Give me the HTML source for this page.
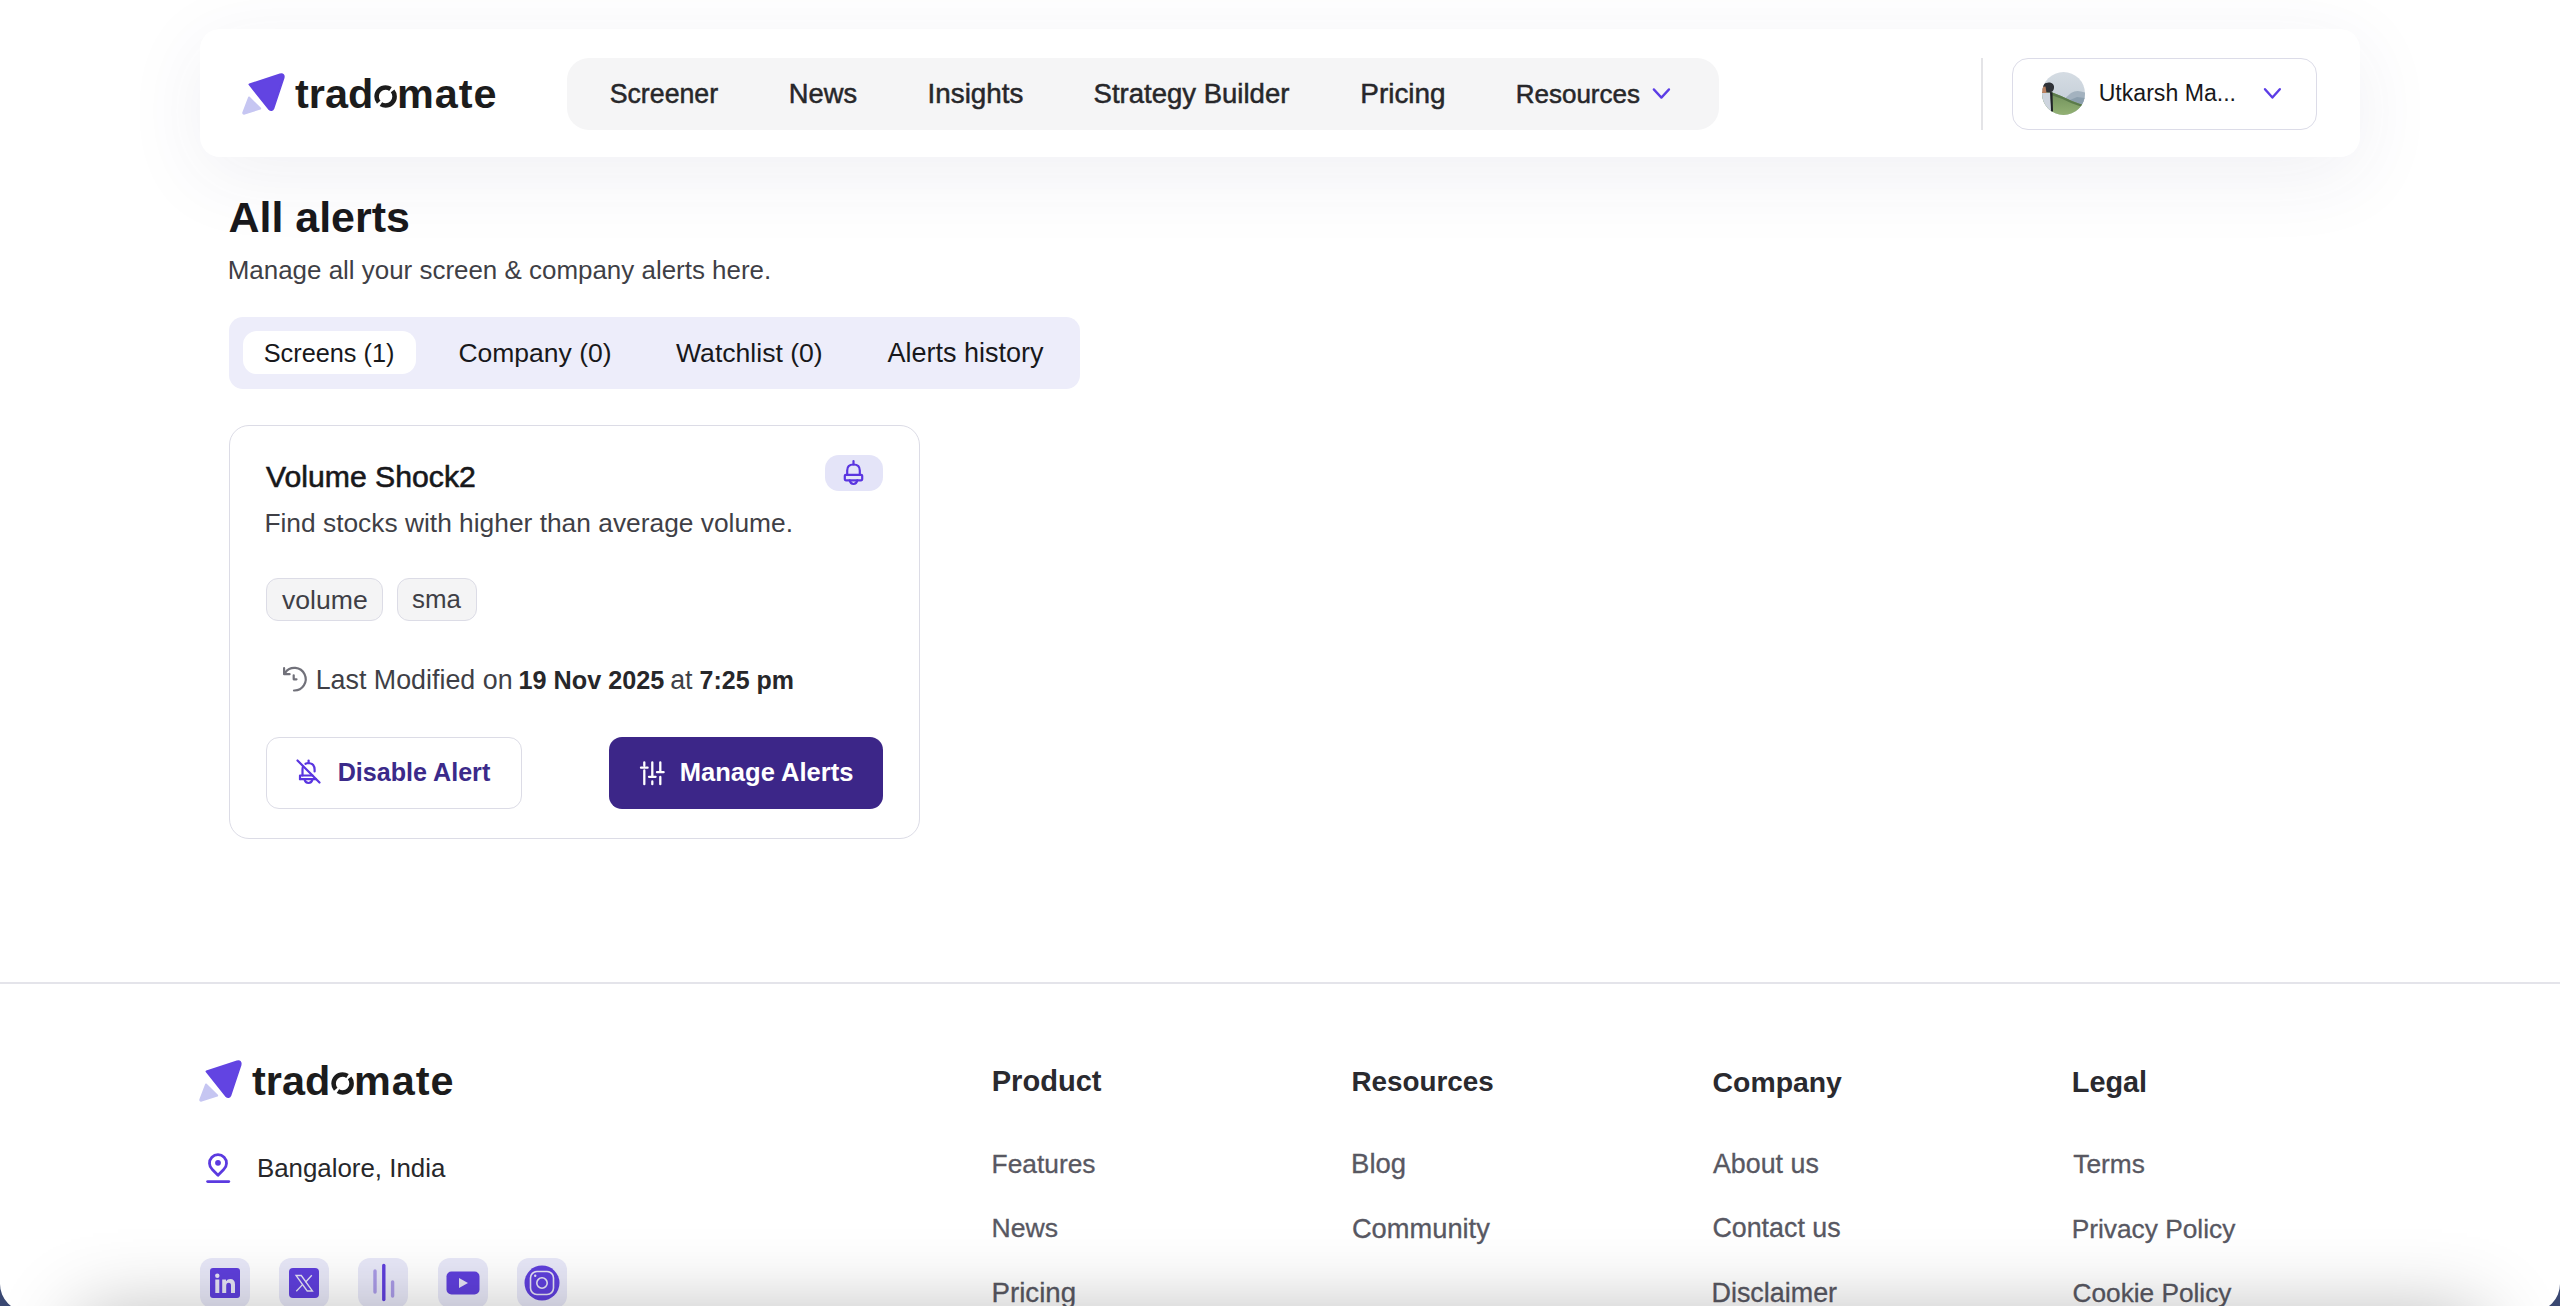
<!DOCTYPE html>
<html><head><meta charset="utf-8">
<style>
*{box-sizing:border-box;margin:0;padding:0}
html,body{width:2560px;height:1306px;overflow:hidden;background:#fff}
body{position:relative;font-family:"Liberation Sans",sans-serif;color:#18181b}
.abs{position:absolute}
.t{position:absolute;white-space:nowrap;line-height:1}
#hdr{left:200px;top:29px;width:2160px;height:128px;border-radius:20px;background:#fff;box-shadow:0 18px 80px rgba(50,50,110,0.075)}
#nav{left:567px;top:58px;width:1152px;height:72px;border-radius:22px;background:#f5f5f6}
.nv{font-size:26.3px;color:#27272a;-webkit-text-stroke:0.5px #27272a}
#divv{left:1981px;top:58px;width:2px;height:72px;background:#e4e4e7}
#prof{left:2012px;top:58px;width:305px;height:72px;border-radius:16px;border:1.5px solid #dcdce8;background:#fff}
#tabs{left:229px;top:317px;width:851px;height:72px;border-radius:14px;background:#ededfa}
#tact{left:243px;top:331px;width:173px;height:43px;border-radius:14px;background:#fff}
.tb{font-size:26px;color:#18181b}
#card{left:229px;top:425px;width:691px;height:414px;border-radius:20px;border:1.5px solid #dcdce6;background:#fff}
#badge{left:825px;top:455px;width:58px;height:36px;border-radius:14px;background:#e4e4f8}
.chip{position:absolute;top:578px;height:43px;border-radius:12px;background:#f4f4f5;border:1.5px solid #dcdce6}
#btn1{left:266px;top:737px;width:256px;height:72px;border-radius:13px;border:1.5px solid #dcdce6;background:#fff}
#btn2{left:609px;top:737px;width:274px;height:72px;border-radius:13px;background:#3c2688}
#fline{left:0;top:982px;width:2560px;height:2px;background:#e4e4ea}
.soc{position:absolute;top:1258px;width:50px;height:50px;border-radius:12px;background:#e8e8f8}
.fh{font-size:28.3px;font-weight:700;color:#2a2a2f}
.fl{font-size:26.8px;color:#585862;-webkit-text-stroke:0.3px #585862}
#shade{left:80px;top:1316px;width:2400px;height:400px;box-shadow:0 0 76px rgba(0,0,0,0.3)}
</style></head>
<body>
<!-- header -->
<div id="hdr" class="abs"></div>
<div class="abs" style="left:240px;top:70px;width:260px;height:48px">
  <svg class="abs" style="left:-0.5px;top:0.5px" width="48" height="48" viewBox="0 0 48 48">
    <path d="M9.5 13.5 L40 3.5 Q44.5 2.5 43.5 7 L33.5 37 Q32 40.5 29 38 Z" fill="#6244e2" stroke="#6244e2" stroke-width="2" stroke-linejoin="round"/>
    <path d="M9 26.5 L20.2 37.5 L4.5 42.5 Q3 43 3.3 41.5 Z" fill="#c6c6f2" stroke="#c6c6f2" stroke-width="2" stroke-linejoin="round"/>
  </svg>
  <div class="t" style="left:55px;top:4px;font-size:41.4px;font-weight:700;color:#1c1c1c">trad</div>
  <svg class="abs" style="left:131px;top:12px" width="30" height="30" viewBox="0 0 30 30"><circle cx="14.6" cy="14.5" r="9" fill="none" stroke="#1c1c1c" stroke-width="4.6" stroke-dasharray="25.5 2.8" stroke-dashoffset="6.5"/></svg>
  <div class="t" style="left:157px;top:4px;font-size:41.4px;font-weight:700;color:#1c1c1c;letter-spacing:1px">mate</div>
</div>
<div id="nav" class="abs"></div>
<div class="t nv" style="left:609.7px;top:80.6px;font-size:26.72px">Screener</div>
<div class="t nv" style="left:788.8px;top:80.1px;font-size:27.31px">News</div>
<div class="t nv" style="left:927.6px;top:79.5px;font-size:27.80px">Insights</div>
<div class="t nv" style="left:1093.6px;top:79.9px;font-size:27.52px">Strategy Builder</div>
<div class="t nv" style="left:1360.3px;top:79.6px;font-size:27.92px">Pricing</div>
<div class="t nv" style="left:1515.7px;top:81.2px;font-size:26.01px">Resources</div>
<svg class="abs" style="left:1650px;top:84px" width="22" height="18" viewBox="0 0 22 18"><path d="M3.8 5.4 L11.4 13.6 L19 5.4" fill="none" stroke="#5c3de6" stroke-width="2.3" stroke-linecap="round" stroke-linejoin="round"/></svg>
<div id="divv" class="abs"></div>
<div id="prof" class="abs"></div>
<svg class="abs" style="left:2042px;top:72px" width="43" height="43" viewBox="0 0 43 43">
  <defs><clipPath id="avc"><circle cx="21.5" cy="21.5" r="21.5"/></clipPath>
  <linearGradient id="sky" x1="0" y1="0" x2="0" y2="1"><stop offset="0" stop-color="#d5dce3"/><stop offset="1" stop-color="#bfcad4"/></linearGradient>
  <linearGradient id="hill" x1="0" y1="0" x2="0" y2="1"><stop offset="0" stop-color="#6f8f5a"/><stop offset="1" stop-color="#93b174"/></linearGradient></defs>
  <g clip-path="url(#avc)">
    <rect width="43" height="43" fill="url(#sky)"/>
    <path d="M20 29 L29 21 Q34 18 39 19.5 L43 20.5 V36 H20 Z" fill="#a3b2bf"/>
    <path d="M28 28 L35 25 L43 26 V36 H28 Z" fill="#8c9fae"/>
    <path d="M9 20 Q20 24 30 29 Q37 32 43 33 V43 H0 V20 Z" fill="url(#hill)"/>
    <path d="M9 20 Q20 24 30 29 Q37 32 43 33 V35 Q36 34 29 31 Q19 26 9 23 Z" fill="#5a7a4a"/>
    <path d="M0 21 L8.5 20.5 L9.5 43 H0 Z" fill="#cdd4de"/>
    <path d="M8 20 L10.5 20.5 L11 39 L9.2 41 Z" fill="#1f2227"/>
    <path d="M0.5 13 Q3 10 8 10.5 Q12.5 11.5 12 16 Q11.5 20 7.5 20.5 L2 20 Q0 18 0.5 13 Z" fill="#2f3237"/>
    <path d="M0 15 L3.5 14.5 L4.5 21 L0 21 Z" fill="#b98060"/>
  </g>
</svg>
<div class="t" style="left:2098.7px;top:81.9px;font-size:23.10px;color:#18181b">Utkarsh Ma...</div>
<svg class="abs" style="left:2261px;top:84px" width="22" height="18" viewBox="0 0 22 18"><path d="M4 5.2 L11.4 13.5 L18.8 5.2" fill="none" stroke="#5c3de6" stroke-width="2.4" stroke-linecap="round" stroke-linejoin="round"/></svg>

<!-- page title -->
<div class="t" style="left:228.5px;top:195.6px;font-size:42.94px;font-weight:700;color:#18181b">All alerts</div>
<div class="t" style="left:227.7px;top:257.7px;font-size:25.94px;color:#3f3f46">Manage all your screen &amp; company alerts here.</div>

<!-- tabs -->
<div id="tabs" class="abs"></div>
<div id="tact" class="abs"></div>
<div class="t tb" style="left:263.7px;top:340.6px;font-size:25.30px">Screens (1)</div>
<div class="t tb" style="left:458.4px;top:339.6px;font-size:26.51px">Company (0)</div>
<div class="t tb" style="left:676.0px;top:339.5px;font-size:26.59px">Watchlist (0)</div>
<div class="t tb" style="left:887.5px;top:339.9px;font-size:26.99px">Alerts history</div>

<!-- card -->
<div id="card" class="abs"></div>
<div class="t" style="left:266.0px;top:461.9px;font-size:30.20px;color:#18181b;-webkit-text-stroke:0.6px #18181b">Volume Shock2</div>
<div id="badge" class="abs"></div>
<svg class="abs" style="left:838px;top:457px" width="32" height="32" viewBox="0 0 32 32">
  <g fill="none" stroke="#5a35e0" stroke-width="2.2" stroke-linecap="round" stroke-linejoin="round">
    <path d="M15.5 4 V7.5"/>
    <path d="M9.2 17.8 V13.5 Q9.2 7.5 15.5 7.5 Q21.8 7.5 21.8 13.5 V17.8"/>
    <rect x="6.8" y="17.8" width="17.4" height="5.5" rx="1"/>
    <path d="M11.7 23.3 Q12.5 27 15.5 27 Q18.5 27 19.3 23.3"/>
  </g>
</svg>
<div class="t" style="left:264.4px;top:509.7px;font-size:26.35px;color:#3f3f46">Find stocks with higher than average volume.</div>
<div class="chip" style="left:266px;width:117px"></div>
<div class="t" style="left:282px;top:586.5px;font-size:26.6px;color:#3f3f46">volume</div>
<div class="chip" style="left:397px;width:80px"></div>
<div class="t" style="left:412.1px;top:587.3px;font-size:25.9px;color:#3f3f46">sma</div>
<svg class="abs" style="left:278px;top:662px" width="32" height="32" viewBox="0 0 32 32">
  <g fill="none" stroke="#71717a" stroke-width="2.2" stroke-linecap="round" stroke-linejoin="round">
    <path d="M7.3 10.5 A11.3 11.3 0 1 1 16 28.5"/>
    <path d="M6.1 6.2 V12.2 H11.6"/>
    <path d="M15.7 13.3 V17.3 H18.5"/>
  </g>
</svg>
<div class="t" style="left:315.7px;top:666.6px;font-size:26.83px;color:#3f3f46">Last Modified on</div>
<div class="t" style="left:518.5px;top:667.9px;font-size:25.22px;font-weight:700;color:#27272a">19 Nov 2025</div>
<div class="t" style="left:670.2px;top:666.6px;font-size:26.8px;color:#3f3f46">at</div>
<div class="t" style="left:699.6px;top:668.2px;font-size:24.95px;font-weight:700;color:#27272a">7:25 pm</div>
<div id="btn1" class="abs"></div>
<svg class="abs" style="left:292px;top:756px" width="32" height="32" viewBox="0 0 32 32">
  <g fill="none" stroke="#5a35e0" stroke-width="2.2" stroke-linecap="round" stroke-linejoin="round">
    <path d="M16.6 4.5 V7"/>
    <path d="M13.5 7.8 Q15 7 16.6 7 Q22.4 7.5 22.6 13.5 V15.5"/>
    <path d="M11 10.5 Q10.5 12 10.5 13.5 V19.5"/>
    <path d="M8 23.2 V19.5 H20.5"/>
    <path d="M8 23.2 H24"/>
    <path d="M12.5 23.3 Q13.3 27 16.5 27 Q19.7 27 20.5 23.3"/>
    <path d="M5.5 4.5 L27.5 26.5"/>
  </g>
</svg>
<div class="t" style="left:337.7px;top:760.3px;font-size:25.12px;font-weight:700;color:#3b2a8a">Disable Alert</div>
<div id="btn2" class="abs"></div>
<svg class="abs" style="left:636px;top:757px" width="32" height="32" viewBox="0 0 32 32">
  <g fill="none" stroke="#fff" stroke-width="2.3" stroke-linecap="round">
    <path d="M8.3 5.3 V8.5 M8.3 13.5 V27.2 M5 10.7 H11.6"/>
    <path d="M16.3 5.3 V19.8 M16.3 24.5 V27.2 M13 19.8 H19.6"/>
    <path d="M24.3 5.3 V15.2 M24.3 20 V27.2 M21 15.2 H27.6"/>
  </g>
</svg>
<div class="t" style="left:679.8px;top:760.0px;font-size:25.54px;font-weight:700;color:#fff">Manage Alerts</div>

<!-- footer -->
<div id="fline" class="abs"></div>
<div class="abs" style="left:197px;top:1057px;width:260px;height:48px">
  <svg class="abs" style="left:-0.5px;top:0.5px" width="48" height="48" viewBox="0 0 48 48">
    <path d="M9.5 13.5 L40 3.5 Q44.5 2.5 43.5 7 L33.5 37 Q32 40.5 29 38 Z" fill="#6244e2" stroke="#6244e2" stroke-width="2" stroke-linejoin="round"/>
    <path d="M9 26.5 L20.2 37.5 L4.5 42.5 Q3 43 3.3 41.5 Z" fill="#c6c6f2" stroke="#c6c6f2" stroke-width="2" stroke-linejoin="round"/>
  </svg>
  <div class="t" style="left:55px;top:4px;font-size:41.4px;font-weight:700;color:#1c1c1c">trad</div>
  <svg class="abs" style="left:131px;top:12px" width="30" height="30" viewBox="0 0 30 30"><circle cx="14.6" cy="14.5" r="9" fill="none" stroke="#1c1c1c" stroke-width="4.6" stroke-dasharray="25.5 2.8" stroke-dashoffset="6.5"/></svg>
  <div class="t" style="left:157px;top:4px;font-size:41.4px;font-weight:700;color:#1c1c1c;letter-spacing:1px">mate</div>
</div>
<svg class="abs" style="left:202px;top:1150px" width="32" height="36" viewBox="0 0 32 36">
  <g fill="none" stroke="#5b3ae0" stroke-width="2.8" stroke-linecap="round" stroke-linejoin="round">
    <path d="M16 25.3 L10.3 19.5 A8.5 8.5 0 1 1 21.7 19.5 Z"/>
    <path d="M5.6 31.6 H26.8"/>
  </g>
  <circle cx="16" cy="12.8" r="2.9" fill="#5b3ae0"/>
</svg>
<div class="t" style="left:256.9px;top:1155.7px;font-size:25.89px;color:#27272a">Bangalore, India</div>

<div class="soc" style="left:200px"></div>
<div class="soc" style="left:279px"></div>
<div class="soc" style="left:358px"></div>
<div class="soc" style="left:438px"></div>
<div class="soc" style="left:517px"></div>
<!-- linkedin -->
<svg class="abs" style="left:210px;top:1268px" width="30" height="30" viewBox="0 0 30 30">
  <rect width="30" height="30" rx="3" fill="#5f3fdc"/>
  <circle cx="7.3" cy="7.8" r="2.2" fill="#e6e4f5"/>
  <rect x="5.3" y="11.5" width="4" height="13.5" fill="#e6e4f5"/>
  <path d="M12.2 11.5 H16 V13.3 Q17.3 11.1 20.3 11.1 Q25 11.1 25 16.6 V25 H21 V17.5 Q21 14.7 18.7 14.7 Q16.2 14.7 16.2 17.7 V25 H12.2 Z" fill="#e6e4f5"/>
</svg>
<!-- x -->
<svg class="abs" style="left:289px;top:1268px" width="30" height="30" viewBox="0 0 30 30">
  <rect width="30" height="30" rx="4" fill="#5f3fdc"/>
  <path d="M7 7.5 H12.3 L23.5 23 H18.2 Z" fill="none" stroke="#e6e4f5" stroke-width="1.3"/>
  <path d="M22.8 7.3 L16.5 14.2 M13.5 16.6 L7.3 23.3" stroke="#e6e4f5" stroke-width="1.3"/>
</svg>
<!-- bars -->
<svg class="abs" style="left:368px;top:1262px" width="30" height="42" viewBox="0 0 30 42">
  <path d="M7 9 V30" stroke="#a99ae6" stroke-width="3.4" stroke-linecap="round"/>
  <path d="M15.8 3.5 V37.5" stroke="#5f3fdc" stroke-width="3.4" stroke-linecap="round"/>
  <path d="M24.6 20 V34" stroke="#a99ae6" stroke-width="3.4" stroke-linecap="round"/>
</svg>
<!-- youtube -->
<svg class="abs" style="left:446px;top:1271px" width="34" height="24" viewBox="0 0 34 24">
  <rect x="0.5" y="0.5" width="33" height="23" rx="5" fill="#5f3fdc"/>
  <path d="M13 7 L22 12 L13 17 Z" fill="#e6e4f5"/>
</svg>
<!-- instagram -->
<svg class="abs" style="left:524px;top:1265px" width="36" height="36" viewBox="0 0 36 36">
  <circle cx="18" cy="18" r="17.5" fill="#5f3fdc"/>
  <rect x="6.5" y="6.5" width="23" height="23" rx="6.5" fill="none" stroke="#e6e4f5" stroke-width="1.6"/>
  <circle cx="18" cy="18" r="5.2" fill="none" stroke="#e6e4f5" stroke-width="1.6"/>
  <circle cx="11.2" cy="10.8" r="1.2" fill="#e6e4f5"/>
</svg>

<div class="t fh" style="left:991.7px;top:1067.4px;font-size:29.08px">Product</div>
<div class="t fh" style="left:1351.4px;top:1068.4px;font-size:27.84px">Resources</div>
<div class="t fh" style="left:1712.6px;top:1068.0px;font-size:28.38px">Company</div>
<div class="t fh" style="left:2071.8px;top:1067.6px;font-size:28.83px">Legal</div>
<div class="t fl" style="left:991.6px;top:1150.5px;font-size:26.32px">Features</div>
<div class="t fl" style="left:991.6px;top:1215.3px;font-size:26.60px">News</div>
<div class="t fl" style="left:991.5px;top:1279.1px;font-size:27.70px">Pricing</div>
<div class="t fl" style="left:1351.1px;top:1149.5px;font-size:27.50px">Blog</div>
<div class="t fl" style="left:1351.9px;top:1214.7px;font-size:27.29px">Community</div>
<div class="t fl" style="left:1713.0px;top:1150.9px;font-size:26.80px">About us</div>
<div class="t fl" style="left:1712.4px;top:1215.1px;font-size:26.84px">Contact us</div>
<div class="t fl" style="left:1711.5px;top:1279.8px;font-size:26.91px">Disclaimer</div>
<div class="t fl" style="left:2073.3px;top:1150.5px;font-size:26.29px">Terms</div>
<div class="t fl" style="left:2071.7px;top:1215.5px;font-size:26.30px">Privacy Policy</div>
<div class="t fl" style="left:2072.5px;top:1280.4px;font-size:26.24px">Cookie Policy</div>

<div id="shade" class="abs"></div>
<!-- window corners -->
<svg class="abs" style="left:0;top:1276px" width="30" height="30" viewBox="0 0 30 30"><path d="M0 8 A27.5 27.5 0 0 0 27.5 35.5 L0 35.5 Z" fill="#3a4872"/></svg>
<svg class="abs" style="left:2530px;top:1276px" width="30" height="30" viewBox="0 0 30 30"><path d="M30 8 A27.5 27.5 0 0 1 2.5 35.5 L30 35.5 Z" fill="#3a4872"/></svg>
</body></html>
